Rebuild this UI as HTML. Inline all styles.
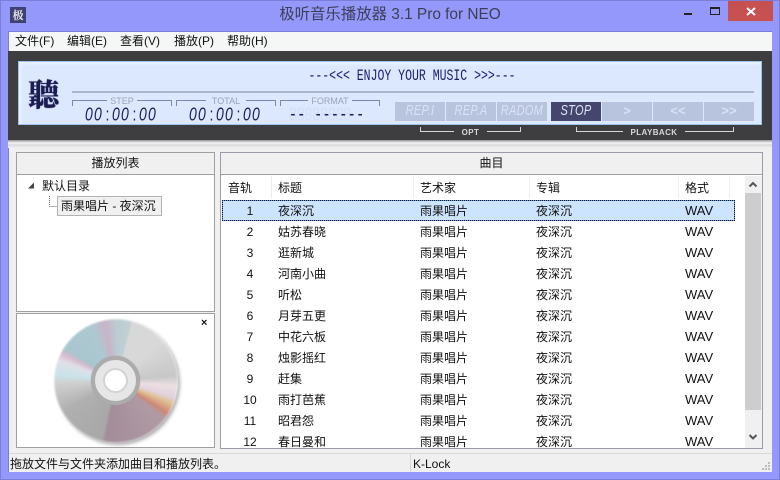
<!DOCTYPE html>
<html><head><meta charset="utf-8"><style>
*{box-sizing:border-box}
html,body{margin:0;padding:0}
body{width:780px;height:480px;overflow:hidden;position:relative;background:#9498fb;font:12px/16px "Liberation Sans","Noto Sans CJK SC",sans-serif;color:#111}
.a{position:absolute;white-space:nowrap}
.lcd{font-family:"Liberation Mono",monospace;color:#1a1f6e}
.dig{font:italic 14px/16px "Liberation Sans",sans-serif;color:#1c2058;letter-spacing:1.2px;transform:scaleY(1.3);transform-origin:0 50%;width:76px}
.dig span{display:inline-block;width:18px}
.dig b{display:inline-block;width:9px;text-align:center;font-weight:normal;letter-spacing:0;font-style:normal}
.lab{font:9px/10px "Liberation Sans",sans-serif;color:#9aa2b8;text-align:center}
.br{position:absolute;height:6px;border:1px solid #7f88a8;border-bottom:0}
.btn{position:absolute;top:40px;height:19px;width:50px;background:#b8c4de;color:#d9e2f6;font:italic 11px/19px "Liberation Sans",sans-serif;text-align:center}
.btn i{display:inline-block;transform:scaleY(1.35);letter-spacing:.3px}
.pan{position:absolute;background:#fff;border:1px solid #a0a0a0}
.ph{position:absolute;left:0;right:0;top:0;height:22px;background:#f0f0f0;border-bottom:1px solid #a0a0a0;text-align:center;line-height:21px}
.r{position:absolute;left:225px;height:21px;line-height:21px;width:510px}
.r span{position:absolute;top:1px}
.r .n{left:0;width:50px;text-align:center}
.r .t{left:53px}.r .u{left:195px}.r .v{left:311px}.r .w{left:460px;font-size:13px;top:0}
.hc{position:absolute;top:176px;line-height:24px}
.hs{position:absolute;top:176px;width:1px;height:22px;background:#e6eef8}
</style></head><body>
<div class="a" style="left:0;top:0;width:780px;height:480px;border:1px solid #7a7ed8"></div>
<div class="a" style="left:10px;top:7px;width:16px;height:16px;background:#3f4270;color:#eee;font:bold 11px/16px 'Noto Serif CJK SC',serif;text-align:center">极</div>
<div class="a" style="left:0;width:780px;top:5px;text-align:center;font-size:15.4px;line-height:20px;color:#3c3f55">极听音乐播放器 3.1 Pro for NEO</div>
<div class="a" style="left:684px;top:13px;width:8px;height:2px;background:#222"></div>
<div class="a" style="left:710px;top:7px;width:10px;height:8px;border:1px solid #222;border-top-width:2px"></div>
<div class="a" style="left:728px;top:1px;width:45px;height:20px;background:#c75050"></div>
<svg class="a" style="left:728px;top:1px" width="45" height="20"><path d="M19 7l8 7M27 7l-8 7" stroke="#fff" stroke-width="2" fill="none"/></svg>

<div class="a" style="left:8px;top:31px;width:764px;height:441px;background:#f0f0f0;border-left:1px solid #7a7ed8;border-top:1px solid #7a7ed8"></div>
<div class="a" style="left:9px;top:32px;width:763px;height:19px;background:#f5f6f6"></div>
<div class="a" style="left:15px;top:33px">文件(F)</div>
<div class="a" style="left:67px;top:33px">编辑(E)</div>
<div class="a" style="left:120px;top:33px">查看(V)</div>
<div class="a" style="left:174px;top:33px">播放(P)</div>
<div class="a" style="left:227px;top:33px">帮助(H)</div>

<div class="a" style="left:8px;top:51px;width:764px;height:89px;background:#3e3e40"></div>
<div class="a" style="left:8px;top:140px;width:764px;height:8px;background:linear-gradient(#8d8d8d,#dcdcdc 25%,#f4f4f4 45%,#d8d8d8 60%,#f2f2f2)"></div>
<div class="a" style="left:18px;top:61px;width:744px;height:64px;background:#dbe8fe;border:1px solid #9cc4f0;box-shadow:inset 2px 2px 3px #eef4ff">
 <div class="a" style="left:9px;top:11px;font:900 31px/40px 'Noto Serif CJK SC',serif;color:#1b1c50;text-shadow:0 0 1px #4a4c88">聽</div>
 <div class="a" style="left:53px;top:29px;width:682px;height:2px;background:#a9b3cb"></div>
 <div class="a lcd" style="left:52px;width:682px;top:7px;text-align:center;font-size:11.5px;line-height:16px;transform:scaleY(1.4)">---&lt;&lt;&lt; ENJOY YOUR MUSIC &gt;&gt;&gt;---</div>

 <div class="br" style="left:53px;top:38px;width:100px"></div><div class="a lab" style="left:88px;top:34px;width:30px;background:#dbe8fe">STEP</div>
 <div class="br" style="left:157px;top:38px;width:100px"></div><div class="a lab" style="left:187px;top:34px;width:40px;background:#dbe8fe">TOTAL</div>
 <div class="br" style="left:261px;top:38px;width:100px"></div><div class="a lab" style="left:289px;top:34px;width:44px;background:#dbe8fe">FORMAT</div>
 <div class="a dig" style="left:66px;top:44px"><span>00</span><b>:</b><span>00</span><b>:</b><span>00</span></div>
 <div class="a dig" style="left:170px;top:44px"><span>00</span><b>:</b><span>00</span><b>:</b><span>00</span></div>
 <div class="a dig" style="left:270px;top:44px;letter-spacing:0;color:#d3e0f7;width:90px;font-style:normal">88888888</div>
 <div class="a" style="left:270px;top:45px;font:bold 13px/16px 'Liberation Mono',monospace;color:#1c2058;letter-spacing:.6px">-- ------</div>

 <div class="btn" style="left:376px"><i>REP.I</i></div>
 <div class="btn" style="left:427px"><i>REP.A</i></div>
 <div class="btn" style="left:478px"><i>RADOM</i></div>
 <div class="btn" style="left:532px;background:#44466e;color:#dfe4f4"><i>STOP</i></div>
 <div class="btn" style="left:583px;font:bold 13px/19px 'Liberation Mono',monospace">&gt;</div>
 <div class="btn" style="left:634px;font:bold 13px/19px 'Liberation Mono',monospace">&lt;&lt;</div>
 <div class="btn" style="left:685px;font:bold 13px/19px 'Liberation Mono',monospace">&gt;&gt;</div>
</div>
<div class="a" style="left:420px;top:127px;width:101px;height:5px;border:1px solid #d4d4d4;border-top:0"></div>
<div class="a" style="left:454px;top:127px;width:33px;height:11px;background:#3e3e40;color:#d8d8d8;font:bold 8px/11px 'Liberation Sans',sans-serif;text-align:center;letter-spacing:.4px">OPT</div>
<div class="a" style="left:576px;top:127px;width:158px;height:5px;border:1px solid #d4d4d4;border-top:0"></div>
<div class="a" style="left:623px;top:127px;width:62px;height:11px;background:#3e3e40;color:#d8d8d8;font:bold 8px/11px 'Liberation Sans',sans-serif;text-align:center;letter-spacing:.4px">PLAYBACK</div>

<div class="pan" style="left:16px;top:152px;width:199px;height:160px"><div class="ph">播放列表</div></div>
<svg class="a" style="left:25px;top:180px" width="35" height="30"><path d="M3 8.500h6v-6z" fill="#444"/><path d="M24.500 16v10M24.500 26.500h8" stroke="#666" stroke-dasharray="1 1" fill="none"/></svg>
<div class="a" style="left:42px;top:178px">默认目录</div>
<div class="a" style="left:57px;top:196px;width:105px;height:20px;background:#f0f0f0;border:1px solid #b4b4b4;line-height:18px;padding-left:3px">雨果唱片 - 夜深沉</div>

<div class="pan" style="left:16px;top:313px;width:199px;height:135px"></div>
<div class="a" style="left:54px;top:319px;width:124px;height:124px;border-radius:50%;filter:blur(.6px);background:conic-gradient(from 0deg,#b8ccd2 0deg,#c2cfd3 14deg,#d8d8d8 16deg,#d8d8d8 50deg,#c8c8c8 85deg,#ecdfe2 95deg,#e0d2dc 106deg,#e0c090 112deg,#cc8878 122deg,#b09aa4 128deg,#a38d9a 190deg,#a8a8a8 194deg,#b0b0b0 240deg,#d0d0d0 268deg,#c8e4ea 276deg,#dfe0e6 290deg,#d4b8cc 298deg,#a9c6cf 302deg,#adc8d0 335deg,#c8b4c8 350deg,#b8ccd2 360deg);box-shadow:2px 2px 3px #b0b0b0,inset 0 0 2px #fff"></div>
<div class="a" style="left:91px;top:356px;width:49px;height:49px;border-radius:50%;background:#e6e6e6;border:4px solid #acacac;box-shadow:0 0 1px #999"></div>
<div class="a" style="left:105px;top:370px;width:21px;height:21px;border-radius:50%;background:#fff;box-shadow:0 0 0 2px #d2d2d2"></div>
<div class="a" style="left:201px;top:317px;font:bold 11px/12px 'Liberation Sans',sans-serif;color:#111">×</div>

<div class="pan" style="left:220px;top:152px;width:543px;height:297px;border-color:#9a9aa8"><div class="ph">曲目</div></div>
<div class="a" style="left:221px;top:175px;width:524px;height:24px;background:#fff"></div>
<div class="hc" style="left:228px">音轨</div><div class="hc" style="left:278px">标题</div><div class="hc" style="left:420px">艺术家</div><div class="hc" style="left:536px">专辑</div><div class="hc" style="left:685px">格式</div>
<div class="hs" style="left:271px"></div><div class="hs" style="left:413px"></div><div class="hs" style="left:529px"></div><div class="hs" style="left:678px"></div><div class="hs" style="left:729px"></div>

<div class="a" style="left:222px;top:200px;width:513px;height:21px;border:1px dotted #112;background:linear-gradient(#cde4ff,#cde4ff) padding-box,#5a9ae0 border-box"></div>
<div class="r" style="top:200px"><span class="n">1</span><span class="t">夜深沉</span><span class="u">雨果唱片</span><span class="v">夜深沉</span><span class="w">WAV</span></div>
<div class="r" style="top:221px"><span class="n">2</span><span class="t">姑苏春晓</span><span class="u">雨果唱片</span><span class="v">夜深沉</span><span class="w">WAV</span></div>
<div class="r" style="top:242px"><span class="n">3</span><span class="t">逛新城</span><span class="u">雨果唱片</span><span class="v">夜深沉</span><span class="w">WAV</span></div>
<div class="r" style="top:263px"><span class="n">4</span><span class="t">河南小曲</span><span class="u">雨果唱片</span><span class="v">夜深沉</span><span class="w">WAV</span></div>
<div class="r" style="top:284px"><span class="n">5</span><span class="t">听松</span><span class="u">雨果唱片</span><span class="v">夜深沉</span><span class="w">WAV</span></div>
<div class="r" style="top:305px"><span class="n">6</span><span class="t">月芽五更</span><span class="u">雨果唱片</span><span class="v">夜深沉</span><span class="w">WAV</span></div>
<div class="r" style="top:326px"><span class="n">7</span><span class="t">中花六板</span><span class="u">雨果唱片</span><span class="v">夜深沉</span><span class="w">WAV</span></div>
<div class="r" style="top:347px"><span class="n">8</span><span class="t">烛影摇红</span><span class="u">雨果唱片</span><span class="v">夜深沉</span><span class="w">WAV</span></div>
<div class="r" style="top:368px"><span class="n">9</span><span class="t">赶集</span><span class="u">雨果唱片</span><span class="v">夜深沉</span><span class="w">WAV</span></div>
<div class="r" style="top:389px"><span class="n">10</span><span class="t">雨打芭蕉</span><span class="u">雨果唱片</span><span class="v">夜深沉</span><span class="w">WAV</span></div>
<div class="r" style="top:410px"><span class="n">11</span><span class="t">昭君怨</span><span class="u">雨果唱片</span><span class="v">夜深沉</span><span class="w">WAV</span></div>
<div class="a" style="left:221px;top:431px;width:524px;height:17px;overflow:hidden"><div class="r" style="left:4px;top:0"><span class="n">12</span><span class="t">春日曼和</span><span class="u">雨果唱片</span><span class="v">夜深沉</span><span class="w">WAV</span></div></div>

<div class="a" style="left:745px;top:176px;width:17px;height:272px;background:#f0f0f0"></div>
<div class="a" style="left:745px;top:193px;width:16px;height:217px;background:#cdcdcd"></div>
<svg class="a" style="left:745px;top:176px" width="17" height="272"><path d="M4.500 10.500l3.500-3.500 3.500 3.500M4.500 259l3.500 3.500 3.500-3.500" fill="none" stroke="#555" stroke-width="2"/></svg>

<div class="a" style="left:9px;top:453px;width:763px;height:1px;background:#d8d8d8"></div>
<div class="a" style="left:410px;top:454px;width:1px;height:18px;background:#d8d8d8"></div>
<div class="a" style="left:10px;top:456px">拖放文件与文件夹添加曲目和播放列表。</div>
<div class="a" style="left:413px;top:456px">K-Lock</div>
<svg class="a" style="left:762px;top:462px" width="9" height="9"><path d="M6 0h2v2H6zM3 3h2v2H3zM6 3h2v2H6zM0 6h2v2H0zM3 6h2v2H3zM6 6h2v2H6z" fill="#bdbdbd"/></svg>
</body></html>
